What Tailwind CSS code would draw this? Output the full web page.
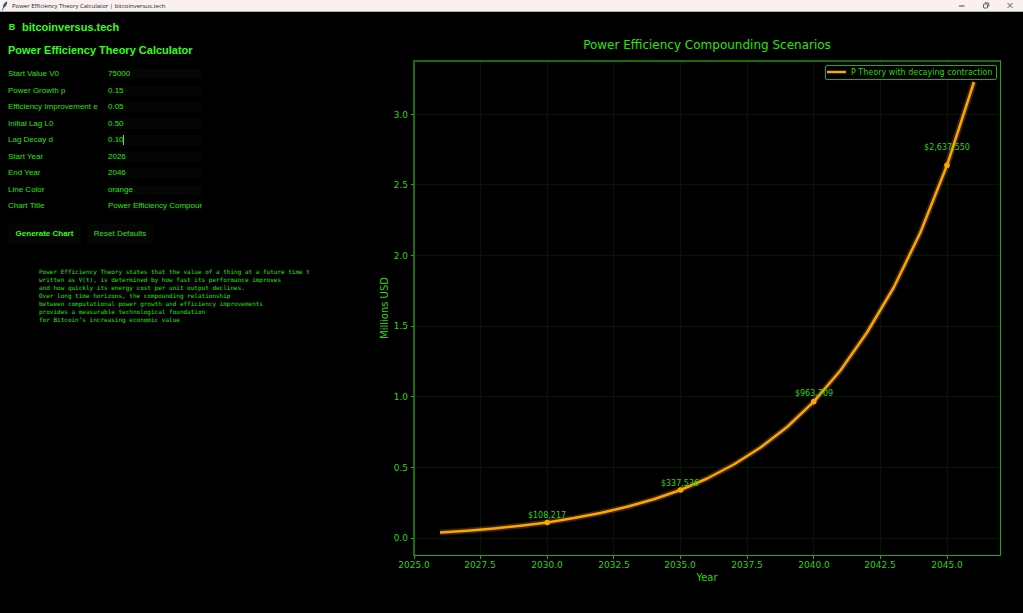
<!DOCTYPE html>
<html lang="en">
<head>
<meta charset="utf-8">
<meta name="viewport" content="width=device-width, initial-scale=1">
<title>Power Efficiency Theory Calculator | bitcoinversus.tech</title>
<script src="https://cdn.jsdelivr.net/npm/@tailwindcss/browser@4"></script>
</head>
<body class="flex min-h-screen flex-col bg-black font-['Liberation_Sans',Arial,sans-serif] text-[8px] leading-[10px] text-[#2de010]">
<header class="flex h-3 items-center justify-between border-b border-[#b5aeac] bg-[#f9f1ef] text-[#222]">
  <div class="flex items-center gap-1 pl-px">
    <svg class="h-2.5 w-[7px]" viewBox="0 0 7 10" aria-hidden="true">
      <path d="M6.200 .5C4.300.8 2.400 2.800 2 5.200l.2 1.700C4.400 6.300 6.300 3.500 6.200.5Z" fill="#30648d"/>
      <path d="M5.600 1.500 2.600 6 1.300 9.500" stroke="#20384c" stroke-width=".7" fill="none"/>
    </svg>
    <span class="whitespace-nowrap font-['Open_Sans',sans-serif] text-[6px]">Power Efficiency Theory Calculator | bitcoinversus.tech</span>
  </div>
  <div class="flex gap-4 pr-[9px]">
    <button type="button" aria-label="Minimize" class="flex size-2 items-center"><svg class="size-2" viewBox="0 0 8 8"><path d="M1 4h5.500" stroke="#333" stroke-width=".9"/></svg></button>
    <button type="button" aria-label="Restore" class="flex size-2 items-center"><svg class="size-2" viewBox="0 0 8 8" fill="none" stroke="#333" stroke-width=".8"><rect x="1.500" y="2" width="4" height="4" rx=".8"/><path d="M2.800 .8h2.700a1.300 1.300 0 0 1 1.300 1.300v2.600"/></svg></button>
    <button type="button" aria-label="Close" class="flex size-2 items-center"><svg class="size-2" viewBox="0 0 8 8"><path d="m1.500 1 5 5m0-5-5 5" stroke="#333" stroke-width=".8"/></svg></button>
  </div>
</header>
<main class="flex flex-1">
  <section class="flex w-[372px] shrink-0 flex-col items-start pl-2 pt-2">
    <div class="flex items-center gap-[6px] font-bold text-[#33ff14]">
      <span class="w-2 text-center text-[9px]">B</span>
      <span class="text-[11px] leading-[14px]">bitcoinversus.tech</span>
    </div>
    <h1 class="mt-[9px] whitespace-nowrap text-[11px] font-bold leading-[14px] text-[#33ff14]">Power Efficiency Theory Calculator</h1>
    <form class="mt-3">
      <div class="grid h-[142px] grid-cols-[100px_94px] content-between">
        <label for="v0">Start Value V0</label><input id="v0" value="75000" class="h-2.5 w-full bg-[#050505] outline-none">
        <label for="p">Power Growth p</label><input id="p" value="0.15" class="h-2.5 w-full bg-[#050505] outline-none">
        <label for="e" class="whitespace-nowrap">Efficiency Improvement e</label><input id="e" value="0.05" class="h-2.5 w-full bg-[#050505] outline-none">
        <label for="l0">Initial Lag L0</label><input id="l0" value="0.50" class="h-2.5 w-full bg-[#050505] outline-none">
        <label for="d">Lag Decay d</label>
        <div class="relative"><input id="d" value="0.10" class="block h-2.5 w-full bg-[#050505] outline-none"><span class="absolute left-[15px] top-0 h-2.5 w-px bg-[#33ff14]"></span></div>
        <label for="sy">Start Year</label><input id="sy" value="2026" class="h-2.5 w-full bg-[#050505] outline-none">
        <label for="ey">End Year</label><input id="ey" value="2046" class="h-2.5 w-full bg-[#050505] outline-none">
        <label for="lc">Line Color</label><input id="lc" value="orange" class="h-2.5 w-full bg-[#050505] outline-none">
        <label for="ct">Chart Title</label><input id="ct" value="Power Efficiency Compounding Scenarios" class="h-2.5 w-full bg-[#050505] outline-none">
      </div>
      <div class="mt-[13px] flex gap-[6px]">
        <button type="button" class="h-5 w-[73px] bg-[#050505] font-bold text-[#33ff14]">Generate Chart</button>
        <button type="button" class="h-5 w-[66px] bg-[#050505]">Reset Defaults</button>
      </div>
    </form>
    <p class="ml-[31px] mt-6 whitespace-pre font-['DejaVu_Sans_Mono',monospace] text-[6px] leading-[8px]">Power Efficiency Theory states that the value of a thing at a future time t
written as V(t), is determined by how fast its performance improves
and how quickly its energy cost per unit output declines.
Over long time horizons, the compounding relationship
between computational power growth and efficiency improvements
provides a measurable technological foundation
for Bitcoin’s increasing economic value</p>
  </section>
  <section class="flex min-w-0 flex-1">
    <svg class="h-auto w-full" viewBox="372 12 651 601" role="img" aria-label="Power Efficiency Compounding Scenarios" font-family="DejaVu Sans, sans-serif" fill="#2bd40f">
      <text x="707" y="49" font-size="12" text-anchor="middle" fill="#2de010">Power Efficiency Compounding Scenarios</text>
      <path d="M480.500 61V555M547.500 61V555M613.500 61V555M680.500 61V555M747.500 61V555M813.500 61V555M880.500 61V555M947.500 61V555M414 114.500H1000M414 184.500H1000M414 255.500H1000M414 326.500H1000M414 396.500H1000M414 467.500H1000M414 538.500H1000" stroke="#021900" fill="none"/>
      <g fill="none" stroke="#ffa500" stroke-linejoin="round">
        <path d="M440 532.500 467.300 530.700 494 528.400 520.600 525.700 547.200 522.500 573.900 518.100 600.500 513 627.200 506.800 653.900 499.200 680.500 490 707.200 478.500 733.800 464.500 760.500 447.500 787.100 427 813.800 401.600 840.400 370.500 867 332.500 893.700 287.500 920.400 232.500 947 165.300 974 82" stroke-width="6" opacity=".22"/>
        <path d="M440 532.500 467.300 530.700 494 528.400 520.600 525.700 547.200 522.500 573.900 518.100 600.500 513 627.200 506.800 653.900 499.200 680.500 490 707.200 478.500 733.800 464.500 760.500 447.500 787.100 427 813.800 401.600 840.400 370.500 867 332.500 893.700 287.500 920.400 232.500 947 165.300 974 82" stroke-width="2.500"/>
      </g>
      <g fill="#ffa500"><circle cx="547.200" cy="522.500" r="2.800"/><circle cx="680.500" cy="490" r="2.800"/><circle cx="813.800" cy="401.600" r="2.800"/><circle cx="947" cy="165.300" r="2.800"/></g>
      <path d="M414 555V61H1000" stroke="#186c09" stroke-width="2" fill="none" stroke-linecap="square"/>
      <path d="M1000.500 61V555.500H414" stroke="#22a90c" fill="none"/>
      <path d="M414.500 556v3M480.500 556v3M547.500 556v3M613.500 556v3M680.500 556v3M747.500 556v3M813.500 556v3M880.500 556v3M947.500 556v3M411 114.500h3M411 184.500h3M411 255.500h3M411 326.500h3M411 396.500h3M411 467.500h3M411 538.500h3" stroke="#22a90c" fill="none"/>
      <g font-size="9" text-anchor="end">
        <text x="408" y="118">3.0</text><text x="408" y="188">2.5</text><text x="408" y="259">2.0</text><text x="408" y="329">1.5</text><text x="408" y="400">1.0</text><text x="408" y="471">0.5</text><text x="408" y="541">0.0</text>
      </g>
      <g font-size="9" text-anchor="middle">
        <text x="414" y="568">2025.0</text><text x="480" y="568">2027.5</text><text x="547" y="568">2030.0</text><text x="614" y="568">2032.5</text><text x="680" y="568">2035.0</text><text x="747" y="568">2037.5</text><text x="814" y="568">2040.0</text><text x="880" y="568">2042.5</text><text x="947" y="568">2045.0</text>
      </g>
      <g font-size="10" text-anchor="middle">
        <text x="707" y="581">Year</text>
        <text transform="translate(388 308) rotate(-90)">Millions USD</text>
      </g>
      <g font-size="8" text-anchor="middle">
        <text x="547" y="518">$108,217</text><text x="680" y="486">$337,536</text><text x="814" y="396">$963,709</text><text x="947" y="150">$2,637,550</text>
      </g>
      <rect x="825.500" y="65.500" width="171" height="14" rx="1.500" fill="#000" stroke="#22a90c"/>
      <path d="M827 72h19" stroke="#ffa500" stroke-width="2.500"/>
      <text x="851" y="75" font-size="8">P Theory with decaying contraction</text>
    </svg>
  </section>
</main>
</body>
</html>
